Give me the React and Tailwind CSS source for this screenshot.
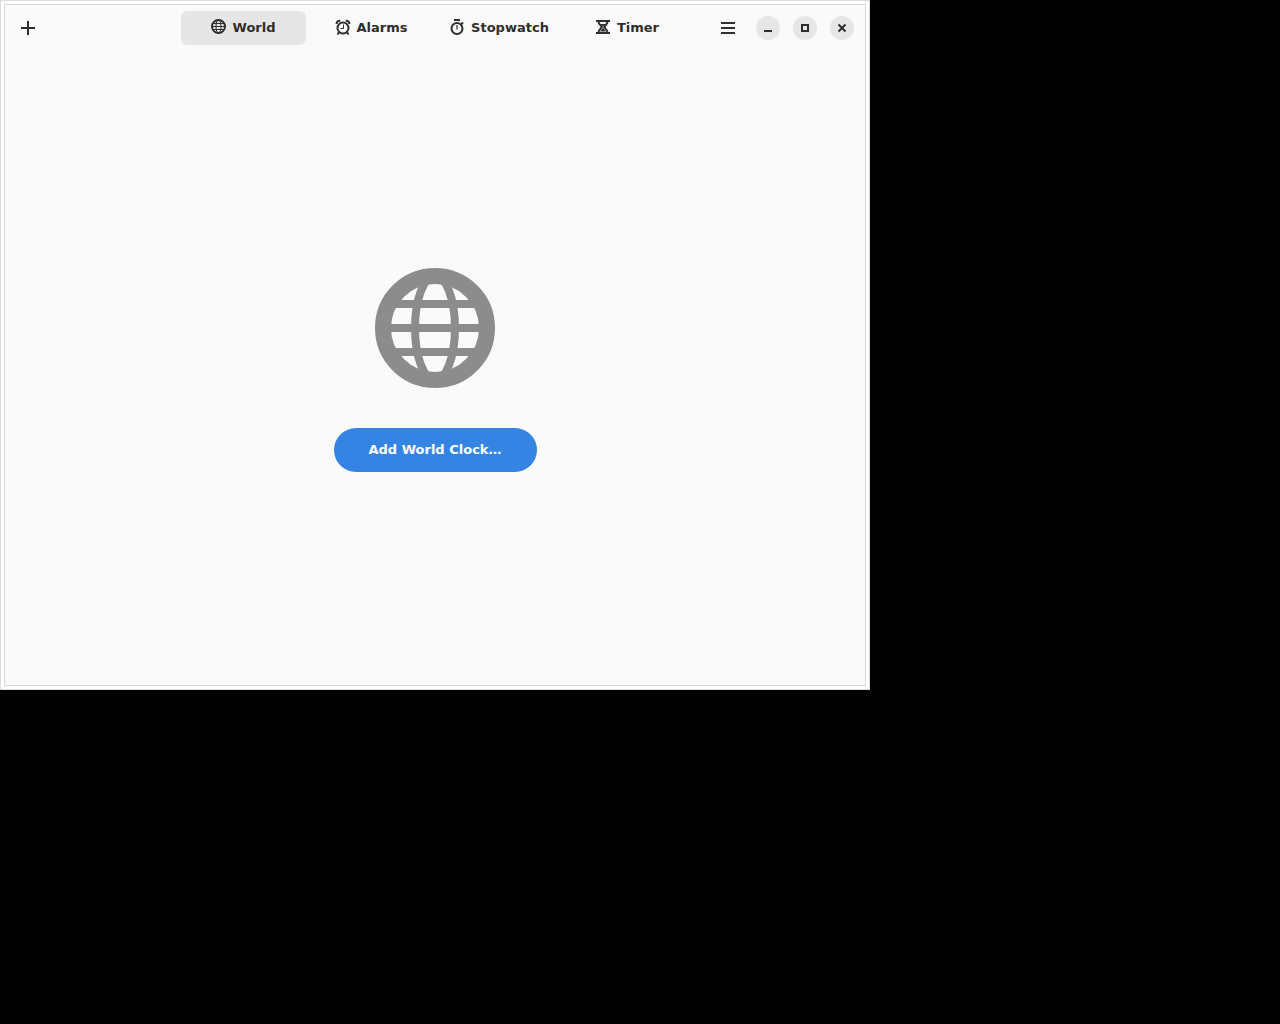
import { useState } from "react";

function GlobeIcon({ className }) {
  return (
    <svg viewBox="0 0 16 16" className={className} fill="none" stroke="currentColor" aria-hidden="true">
      <circle cx="8" cy="8" r="6.5" strokeWidth="2" />
      <ellipse cx="8" cy="8" rx="2.5" ry="6.5" strokeWidth="1" />
      <path d="M3 5h10M2 8h12M3 11h10" strokeWidth="1" />
    </svg>
  );
}

function TabIcon({ children }) {
  return (
    <svg viewBox="0 1 16 16" className="size-4 overflow-visible" fill="none" stroke="currentColor" aria-hidden="true">
      {children}
    </svg>
  );
}

function SmallGlobeIcon() {
  return (
    <TabIcon>
      <circle cx="7.5" cy="7.5" r="6.5" strokeWidth="2" />
      <ellipse cx="7.5" cy="7.5" rx="2.5" ry="6.5" strokeWidth="1" />
      <path d="M2 4.5h11M1 7.5h13M2 10.5h11" strokeWidth="1" />
    </TabIcon>
  );
}

function AlarmIcon() {
  return (
    <TabIcon>
      <circle cx="8" cy="9" r="5.5" strokeWidth="2" />
      <path d="M8.5 5.5v4H5.5" strokeWidth="1" />
      <path d="M1.6 5C1.6 3 3 1.7 5.2 1.7M14.4 5c0-2-1.4-3.3-3.6-3.3" strokeWidth="2" />
      <path d="M4 13 2.6 15.6M12 13l1.4 2.6" strokeWidth="2" />
    </TabIcon>
  );
}

function StopwatchIcon() {
  return (
    <TabIcon>
      <circle cx="8" cy="9.5" r="5.5" strokeWidth="2" />
      <path d="M5 1h6" strokeWidth="2" />
      <path d="M8 6v4.5" strokeWidth="1.2" />
      <path d="m12 5.5 2-2" strokeWidth="2" />
    </TabIcon>
  );
}

function HourglassIcon() {
  return (
    <TabIcon>
      <path d="M1 2h14M1 14h14" strokeWidth="2" />
      <path d="M3.5 2.5C3.5 6 6.5 6 6.5 8S3.5 10 3.5 13.5M12.5 2.5C12.5 6 9.5 6 9.5 8s3 2 3 5.5" strokeWidth="2" />
      <path d="M5.5 5h5L8.5 7v2.5l2.5 3H5l2.5-3V7z" fill="currentColor" stroke="none" />
    </TabIcon>
  );
}

const tabs = [
  { name: "World", Icon: SmallGlobeIcon },
  { name: "Alarms", Icon: AlarmIcon },
  { name: "Stopwatch", Icon: StopwatchIcon },
  { name: "Timer", Icon: HourglassIcon },
];

function WindowButton({ label, children }) {
  return (
    <button type="button" aria-label={label} className="grid size-6 place-items-center rounded-full bg-[#e6e6e6]">
      <svg viewBox="0 0 16 16" className="size-4" fill="none" stroke="currentColor" strokeWidth="2" aria-hidden="true">
        {children}
      </svg>
    </button>
  );
}

export default function App() {
  const [active, setActive] = useState("World");
  return (
    <div className="min-h-screen bg-black font-['DejaVu_Sans',sans-serif] text-[13px] font-bold text-[#2e2e2e]">
      <div className="flex min-h-[690px] w-full max-w-[870px] border border-[#dcdcdc] bg-white p-[3px]">
        <div className="flex grow flex-col border border-[#d8d8d8] bg-[#fafafa]">
          <header className="grid grid-cols-[1fr_auto_1fr] items-center px-[11px] py-1.5">
            <button type="button" aria-label="Add" className="grid h-[34px] w-6 place-items-center rounded-md">
              <svg viewBox="0 0 16 16" className="size-4" fill="none" stroke="currentColor" strokeWidth="2" aria-hidden="true">
                <path d="M8 1v14M1 8h14" />
              </svg>
            </button>
            <nav className="grid grid-cols-[repeat(4,125px)] gap-[3px]">
              {tabs.map(({ name, Icon }) => (
                <button
                  key={name}
                  type="button"
                  aria-pressed={active === name}
                  onClick={() => setActive(name)}
                  className="flex h-[34px] items-center justify-center gap-1.5 rounded-md aria-pressed:bg-[#e6e6e6]"
                >
                  <Icon />
                  <span>{name}</span>
                </button>
              ))}
            </nav>
            <div className="flex items-center justify-end gap-[11px]">
              <button type="button" aria-label="Main menu" className="grid size-[34px] place-items-center rounded-md">
                <svg viewBox="0 0 16 16" className="size-4" fill="none" stroke="currentColor" strokeWidth="2" aria-hidden="true">
                  <path d="M1 3h14M1 8h14M1 13h14" />
                </svg>
              </button>
              <div className="flex gap-[13px]">
                <WindowButton label="Minimize">
                  <path d="M4 11h8" />
                </WindowButton>
                <WindowButton label="Maximize">
                  <path d="M5 5h6v6H5z" />
                </WindowButton>
                <WindowButton label="Close">
                  <path d="m4.5 4.5 7 7M11.5 4.5l-7 7" />
                </WindowButton>
              </div>
            </div>
          </header>
          <main className="flex grow flex-col items-center justify-center gap-9">
            <GlobeIcon className="size-32 text-[#8c8c8c]" />
            <button type="button" className="h-11 min-w-[203px] rounded-full bg-[#3584e4] px-8 text-white">
              Add World Clock…
            </button>
          </main>
        </div>
      </div>
    </div>
  );
}
